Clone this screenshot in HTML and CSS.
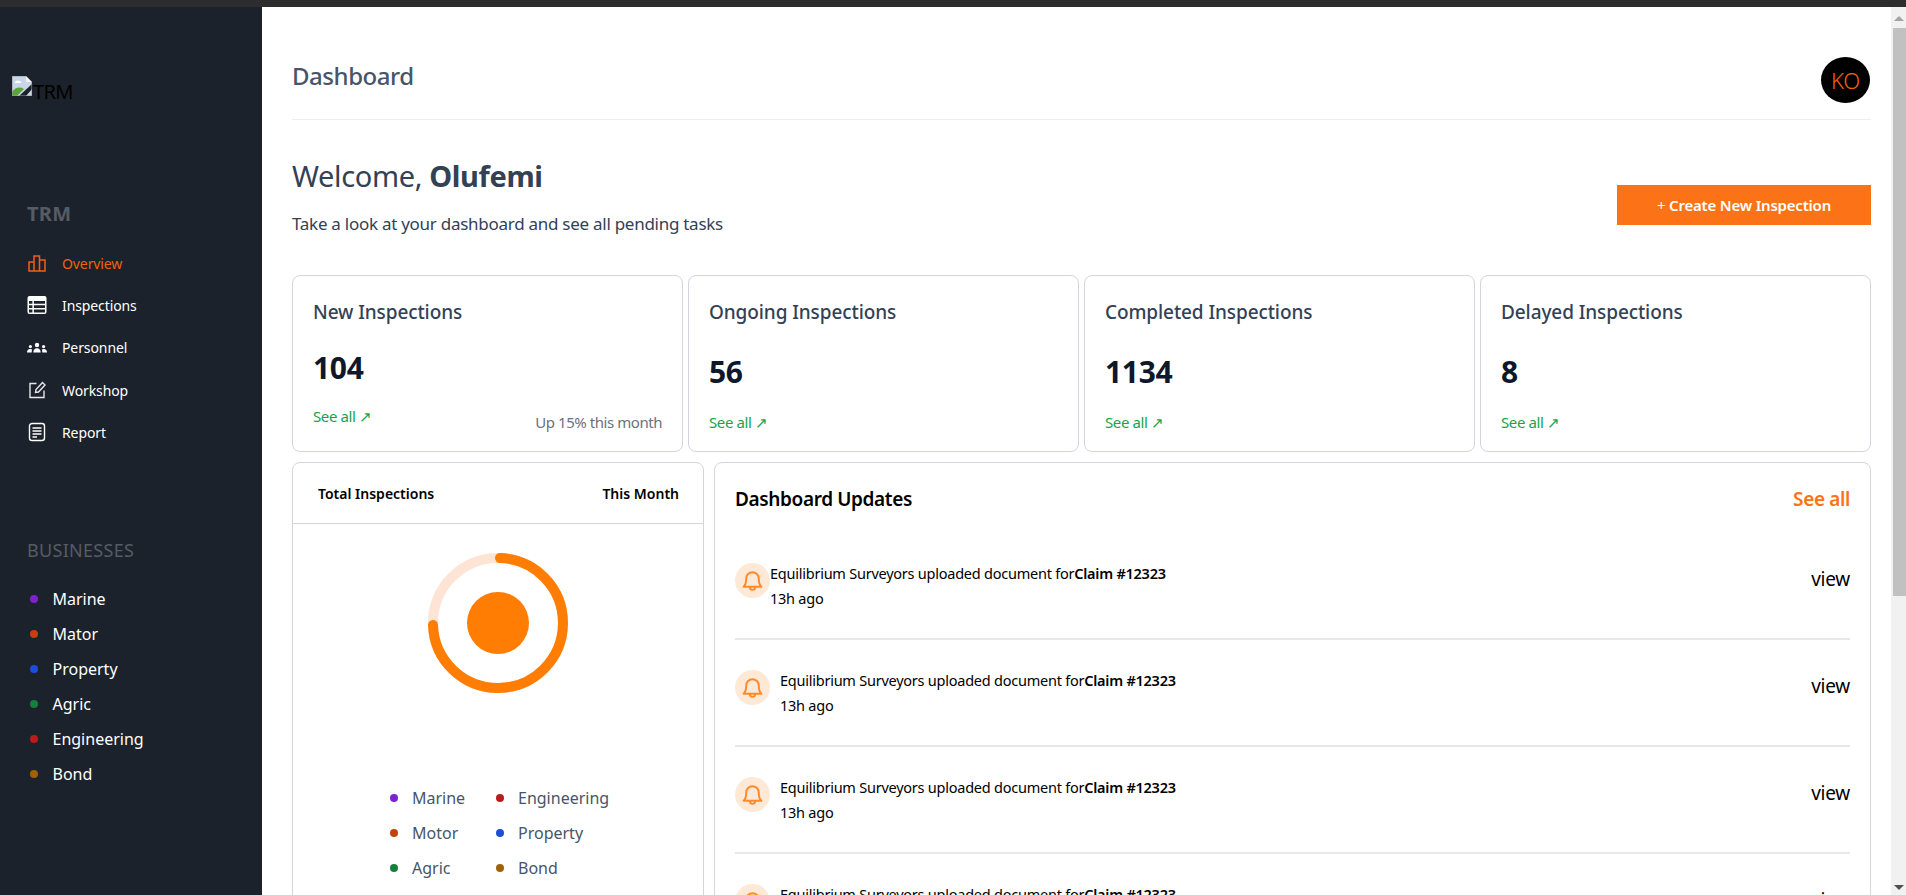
FILE: index.html
```html
<!DOCTYPE html>
<html lang="en">
<head>
<meta charset="utf-8">
<title>Dashboard</title>
<link rel="stylesheet" href="styles.css">
</head>
<body>
<div class="topbar"></div>
<div class="app">
  <aside class="sidebar">
    <div class="logo">
      <svg class="broken" viewBox="0 0 20 20" width="20" height="20">
        <path d="M0 0H14L20 6V20H0Z" fill="#c9d6e8"/>
        <path d="M14 0L20 6H14Z" fill="#f2f2f2"/>
        <path d="M0 20V16Q5 9 12 13L5 20Z" fill="#5aa63c"/>
        <path d="M3 6Q5 3.5 7 5 10 5 9 7H3Z" fill="#fff"/>
        <path d="M7 20L20 8V13L14 20Z" fill="#1c222b"/>
        <path d="M0 0H14L20 6V20H0Z" fill="none" stroke="#9a9a9a" stroke-width="1"/>
      </svg>
      <span class="logo-alt">TRM</span>
    </div>
    <h2 class="side-title">TRM</h2>
    <nav class="nav">
      <a class="nav-item active">
        <svg class="nav-icon" viewBox="0 0 20 20" fill="none" stroke="currentColor" stroke-width="1.5"><path d="M2 9H7V18H2ZM7 3H12.5V18H7ZM12.5 7H18V18H12.5Z"/></svg>
        <span>Overview</span>
      </a>
      <a class="nav-item">
        <svg class="nav-icon" viewBox="0 0 20 20"><path fill="#fff" fill-rule="evenodd" d="M2.5 1H17.5A2 2 0 0 1 19.5 3V17A2 2 0 0 1 17.5 19H2.5A2 2 0 0 1 .5 17V3A2 2 0 0 1 2.5 1ZM2 6V8.8H5.4V6ZM6.9 6V8.8H18V6ZM2 10.2V13H5.4V10.2ZM6.9 10.2V13H18V10.2ZM2 14.4V17.4H5.4V14.4ZM6.9 14.4V17.4H18V14.4Z"/></svg>
        <span>Inspections</span>
      </a>
      <a class="nav-item">
        <svg class="nav-icon" viewBox="0 0 20 20" fill="#fff"><circle cx="10" cy="7" r="2.2"/><path d="M6.3 14.5C6.3 11.8 7.8 10.2 10 10.2S13.7 11.8 13.7 14.5Z"/><circle cx="3.4" cy="8.6" r="1.6"/><path d="M0 14.5C0 12.2 1.2 11 3 11 3.8 11 4.6 11.2 5.2 11.6 4.8 12.4 4.7 13.4 4.7 14.5Z"/><circle cx="16.6" cy="8.6" r="1.6"/><path d="M20 14.5C20 12.2 18.8 11 17 11 16.2 11 15.4 11.2 14.8 11.6 15.2 12.4 15.3 13.4 15.3 14.5Z"/></svg>
        <span>Personnel</span>
      </a>
      <a class="nav-item">
        <svg class="nav-icon" viewBox="0 0 20 20" fill="none" stroke="#e5e7eb" stroke-width="1.4"><path d="M9.5 3.5H3V17.5H17V10.5"/><path d="M8.5 12.5L9 9.5 15.5 2.5 18 5 11.5 12Z"/></svg>
        <span>Workshop</span>
      </a>
      <a class="nav-item">
        <svg class="nav-icon" viewBox="0 0 20 20" fill="none" stroke="#fff" stroke-width="1.4"><rect x="2.5" y="1.5" width="15" height="17" rx="2.5"/><path d="M5.5 6H14.5M5.5 9H14.5M5.5 12H14.5M5.5 15H10"/></svg>
        <span>Report</span>
      </a>
    </nav>
    <h2 class="side-sub">BUSINESSES</h2>
    <ul class="biz">
      <li><i class="dot purple"></i>Marine</li>
      <li><i class="dot rust"></i>Mator</li>
      <li><i class="dot blue"></i>Property</li>
      <li><i class="dot green"></i>Agric</li>
      <li><i class="dot red"></i>Engineering</li>
      <li><i class="dot amber"></i>Bond</li>
    </ul>
  </aside>

  <main class="main">
    <header class="head">
      <h1 class="head-title">Dashboard</h1>
      <div class="avatar">KO</div>
    </header>

    <section class="welcome">
      <div>
        <p class="hello">Welcome, <b>Olufemi</b></p>
        <p class="hello-sub">Take a look at your dashboard and see all pending tasks</p>
      </div>
      <button class="create">+ <b>Create New Inspection</b></button>
    </section>

    <section class="stats">
      <article class="stat stat-first">
        <h3>New Inspections</h3>
        <div class="num">104</div>
        <div class="foot"><a class="see">See all ↗</a><span class="up">Up 15% this month</span></div>
      </article>
      <article class="stat">
        <h3>Ongoing Inspections</h3>
        <div class="num">56</div>
        <div class="foot"><a class="see">See all ↗</a></div>
      </article>
      <article class="stat">
        <h3>Completed Inspections</h3>
        <div class="num">1134</div>
        <div class="foot"><a class="see">See all ↗</a></div>
      </article>
      <article class="stat">
        <h3>Delayed Inspections</h3>
        <div class="num">8</div>
        <div class="foot"><a class="see">See all ↗</a></div>
      </article>
    </section>

    <section class="lower">
      <article class="total">
        <div class="total-head"><span>Total Inspections</span><span>This Month</span></div>
        <svg class="donut" viewBox="0 0 144 144" width="144" height="144">
          <circle cx="72" cy="72" r="65" fill="none" stroke="#fee4d5" stroke-width="10"/>
          <path d="M74 7A65 65 0 1 1 7 74" fill="none" stroke="#ff7d03" stroke-width="10" stroke-linecap="round"/>
          <circle cx="72" cy="72" r="31" fill="#ff7d03"/>
        </svg>
        <div class="legend">
          <span><i class="dot purple"></i>Marine</span>
          <span><i class="dot red"></i>Engineering</span>
          <span><i class="dot rust"></i>Motor</span>
          <span><i class="dot blue"></i>Property</span>
          <span><i class="dot green"></i>Agric</span>
          <span><i class="dot amber"></i>Bond</span>
        </div>
      </article>

      <article class="updates">
        <div class="up-head"><h3>Dashboard Updates</h3><a>See all</a></div>
        <div class="row row-first">
          <span class="bell"><svg viewBox="0 0 24 24" width="25" height="25" fill="none" stroke="#ff8a2b" stroke-width="1.9" stroke-linecap="round" stroke-linejoin="round"><path d="M6 10a6 6 0 0 1 12 0c0 5 1 6.5 2.5 8h-17C5 16.500 6 15 6 10Z"/><path d="M9.500 18.500a2.500 2.500 0 0 0 5 0"/></svg></span>
          <div class="msg"><p>Equilibrium Surveyors uploaded document for<b>Claim #12323</b></p><p>13h ago</p></div>
          <a class="view">view</a>
        </div>
        <div class="row">
          <span class="bell"><svg viewBox="0 0 24 24" width="25" height="25" fill="none" stroke="#ff8a2b" stroke-width="1.9" stroke-linecap="round" stroke-linejoin="round"><path d="M6 10a6 6 0 0 1 12 0c0 5 1 6.500 2.500 8h-17C5 16.500 6 15 6 10Z"/><path d="M9.500 18.500a2.500 2.500 0 0 0 5 0"/></svg></span>
          <div class="msg"><p>Equilibrium Surveyors uploaded document for<b>Claim #12323</b></p><p>13h ago</p></div>
          <a class="view">view</a>
        </div>
        <div class="row">
          <span class="bell"><svg viewBox="0 0 24 24" width="25" height="25" fill="none" stroke="#ff8a2b" stroke-width="1.9" stroke-linecap="round" stroke-linejoin="round"><path d="M6 10a6 6 0 0 1 12 0c0 5 1 6.500 2.500 8h-17C5 16.500 6 15 6 10Z"/><path d="M9.500 18.500a2.500 2.500 0 0 0 5 0"/></svg></span>
          <div class="msg"><p>Equilibrium Surveyors uploaded document for<b>Claim #12323</b></p><p>13h ago</p></div>
          <a class="view">view</a>
        </div>
        <div class="row">
          <span class="bell"><svg viewBox="0 0 24 24" width="25" height="25" fill="none" stroke="#ff8a2b" stroke-width="1.9" stroke-linecap="round" stroke-linejoin="round"><path d="M6 10a6 6 0 0 1 12 0c0 5 1 6.500 2.500 8h-17C5 16.500 6 15 6 10Z"/><path d="M9.500 18.500a2.500 2.500 0 0 0 5 0"/></svg></span>
          <div class="msg"><p>Equilibrium Surveyors uploaded document for<b>Claim #12323</b></p><p>13h ago</p></div>
          <a class="view">view</a>
        </div>
      </article>
    </section>
  </main>

  <div class="scrollbar" aria-hidden="true">
    <i class="arrow-up"></i>
    <div class="thumb"></div>
    <i class="arrow-down"></i>
  </div>
</div>
</body>
</html>
```

FILE: styles.css
```css
* { box-sizing: border-box; }
html, body { margin: 0; height: 100%; overflow: hidden; }
body {
  font-family: "Noto Sans", "Open Sans", sans-serif;
  background: #fff;
  color: #000;
  display: flex;
  flex-direction: column;
}
h1, h2, h3, p, ul { margin: 0; padding: 0; font-weight: inherit; font-size: inherit; }
.topbar { height: 7px; background: #2d2d2d; flex: none; }
.app { flex: 1; display: flex; min-height: 0; overflow: hidden; }

/* sidebar */
.sidebar { width: 262px; flex: none; background: #1c222b; color: #fff; padding: 69px 0 0 27px; }
.logo { display: flex; align-items: flex-start; margin-left: -15px; height: 126px; }
.broken { flex: none; }
.logo-alt { font-size: 20px; line-height: 27px; color: #000; margin: 2px 0 0 1px; letter-spacing: -0.7px; }
.side-title { font-size: 20px; font-weight: 700; line-height: 24px; color: #565b64; letter-spacing: 0.3px; }
.nav { margin-top: 16px; }
.nav-item { display: flex; align-items: center; height: 42.300px; font-size: 14px; color: #fff; letter-spacing: -0.1px; }
.nav-item.active { color: #f4600c; }
.nav-icon { width: 20px; height: 20px; flex: none; margin-right: 15px; }
.side-sub { font-size: 18px; line-height: 24px; color: #565b64; margin-top: 85px; letter-spacing: 0.3px; }
.biz { list-style: none; margin-top: 19px; }
.biz li { display: flex; align-items: center; height: 35px; font-size: 16px; }
.biz .dot { margin: 0 14.500px 0 3px; }

.dot { display: inline-block; width: 8px; height: 8px; border-radius: 50%; flex: none; }
.purple { background: #7e22ce; }
.rust { background: #c2410c; }
.blue { background: #1d4ed8; }
.green { background: #15803d; }
.red { background: #b91c1c; }
.amber { background: #a16207; }

/* main */
.main { flex: 1; min-width: 0; padding: 50px 20px 0 30px; }
.head { display: flex; justify-content: space-between; align-items: flex-start; height: 63px; border-bottom: 1px solid #eceef1; }
.head-title { font-size: 24px; font-weight: 500; line-height: 38px; color: #475569; letter-spacing: -0.45px; }
.avatar { width: 49px; height: 46px; margin-right: 1px; border-radius: 50%; background: #000; color: #f4600c; font-size: 22px; font-weight: 300; letter-spacing: -0.3px; display: flex; align-items: center; justify-content: center; }

.welcome { display: flex; justify-content: space-between; align-items: flex-end; margin-top: 36px; }
.hello { font-size: 29px; line-height: 40px; color: #334155; letter-spacing: -0.36px; }
.hello b { font-weight: 700; }
.hello-sub { font-size: 17px; line-height: 24px; color: #334155; margin-top: 16px; letter-spacing: -0.27px; }
.create { width: 254px; height: 40px; margin-bottom: 11px; border: 0; padding: 0; background: #fb7316; color: #fff; font: inherit; font-size: 15px; letter-spacing: -0.2px; }
.create b { font-weight: 600; }

.stats { display: grid; grid-template-columns: repeat(4, 1fr); gap: 5px; margin-top: 39px; }
.stat { height: 177px; border: 1px solid #d4d4de; border-radius: 8px; padding: 22px 20px 0 20px; display: flex; flex-direction: column; }
.stat h3 { font-size: 19px; font-weight: 500; line-height: 28px; color: #334155; letter-spacing: -0.1px; }
.num { font-size: 30px; font-weight: 700; line-height: 36px; color: #0f172a; margin-top: 28px; letter-spacing: -0.3px; }
.foot { display: flex; justify-content: space-between; align-items: flex-start; margin-top: 22px; font-size: 15px; line-height: 20px; }
.see { color: #16a34a; letter-spacing: -0.4px; }
.up { color: #6b7280; letter-spacing: -0.45px; }
.stat-first .num { margin-top: 24px; }
.stat-first .foot { margin-top: 20px; }
.stat-first .up { margin-top: 6px; }

.lower { display: flex; gap: 10px; margin-top: 10px; align-items: flex-start; }
.total { width: 412px; flex: none; border: 1px solid #d4d4de; border-radius: 8px; padding-bottom: 40px; }
.total-head { height: 61px; padding: 0 24px 0 25px; border-bottom: 1px solid #d4d4de; display: flex; justify-content: space-between; align-items: center; font-size: 14px; font-weight: 600; }
.donut { display: block; margin: 27px auto 0; }
.legend { display: grid; grid-template-columns: 106px 114px; grid-auto-rows: 35px; justify-content: center; margin: 85px 0 0 4px; font-size: 16px; color: #475569; }
.legend span { display: flex; align-items: center; }
.legend .dot { margin-right: 14px; }

.updates { flex: 1; min-width: 0; border: 1px solid #d4d4de; border-radius: 8px; padding: 20px 20px 0; }
.up-head { display: flex; justify-content: space-between; align-items: center; height: 32px; margin-bottom: 18px; font-size: 19px; font-weight: 600; letter-spacing: -0.37px; }
.up-head a { color: #fb7316; }
.row { display: flex; align-items: flex-start; height: 107px; padding-top: 30px; border-bottom: 2px solid #e5e7eb; }
.bell { width: 35px; height: 35px; flex: none; border-radius: 50%; background: #fee9d7; display: flex; align-items: center; justify-content: center; }
.msg { flex: 1; margin: -2px 0 0 10px; font-size: 14.500px; line-height: 25px; letter-spacing: -0.24px; }
.msg b { font-weight: 600; }
.row-first .msg { margin-left: 0; }
.view { font-size: 19px; line-height: 32px; letter-spacing: -0.25px; }

/* scrollbar */
.scrollbar { width: 15px; flex: none; background: #f1f1f1; position: relative; }
.thumb { position: absolute; left: 2px; right: 0; top: 21px; height: 568px; background: #c1c1c1; }
.arrow-up { position: absolute; left: 3px; top: 9px; border: 5px solid transparent; border-top: 0; border-bottom: 5px solid #a3a3a3; }
.arrow-down { position: absolute; left: 3px; bottom: 5px; border: 5px solid transparent; border-bottom: 0; border-top: 5px solid #505050; }
```
